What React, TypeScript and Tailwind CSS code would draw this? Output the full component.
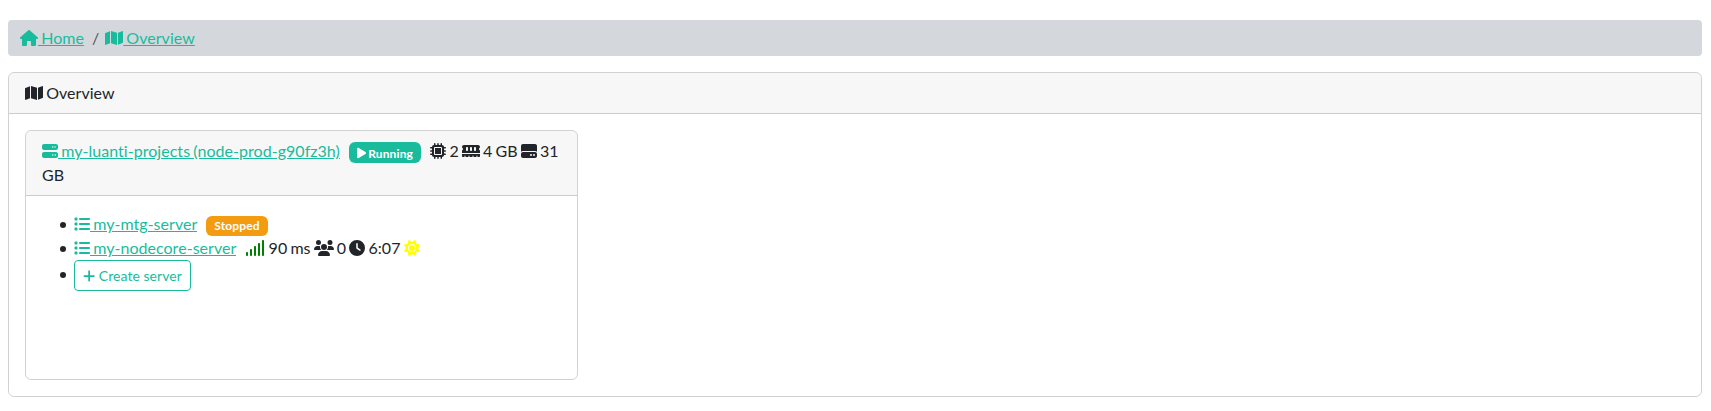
import type { ReactNode } from "react";
import {
  FaHouse, FaMap, FaServer, FaPlay, FaMicrochip, FaMemory, FaHardDrive,
  FaList, FaPlus, FaUsers, FaClock, FaSun, FaSignal,
} from "react-icons/fa6";

const icon = "inline-block h-[1em] align-[-0.125em]";
const gap = " \u00a0 ";

function Link({ children }: { children: ReactNode }) {
  return <a href="#" className="text-[#18bc9c] underline">{children}</a>;
}

function Badge({ className, children }: { className: string; children: ReactNode }) {
  return (
    <span className={`inline-block rounded-md px-[0.65em] py-[0.35em] text-center align-baseline text-xs leading-none font-bold tracking-[0.14px] whitespace-nowrap text-white ${className}`}>
      {children}
    </span>
  );
}

function Item({ children }: { children: ReactNode }) {
  return (
    <li className="before:mr-2 before:-ml-3.5 before:inline-block before:size-1.5 before:rounded-full before:bg-[#212529] before:align-[2px] before:content-['']">
      {children}
    </li>
  );
}

export default function App() {
  return (
    <div className="min-h-screen bg-white pt-5 pr-[9px] pl-2 font-['Lato',sans-serif] text-base leading-6 tracking-[0.04px] text-[#212529] [font-variant-ligatures:none] [word-spacing:-1px]">
      <nav className="mb-4 rounded bg-[#d4d8dd] px-3 py-1.5">
        <ol className="flex">
          <li><Link><FaHouse className={`${icon} w-[1.125em]`} /> Home</Link></li>
          <li className="flex pl-2">
            <span className="pr-1.5 text-[#212529]/75">/</span>
            <span><Link><FaMap className={`${icon} w-[1.125em]`} /> Overview</Link></span>
          </li>
        </ol>
      </nav>

      <section className="overflow-hidden rounded-md border border-black/[0.175]">
        <header className="border-b border-black/[0.175] bg-black/[0.03] px-4 py-2">
          <FaMap className={`${icon} w-[1.125em]`} /> Overview
        </header>
        <div className="p-4">
          <article className="h-[250px] w-1/3 overflow-hidden rounded-md border border-black/[0.175]">
            <header className="border-b border-black/[0.175] bg-black/[0.03] px-4 py-2">
              <Link><FaServer className={`${icon} w-[1em]`} /> my-luanti-projects (node-prod-g90fz3h)</Link>
              {gap}
              <Badge className="bg-[#18bc9c]"><FaPlay className={`${icon} w-[0.75em]`} /> Running</Badge>
              {gap}
              <FaMicrochip className={`${icon} w-[1em]`} /> 2{" "}
              <FaMemory className={`${icon} w-[1.125em]`} /> 4 GB{" "}
              <FaHardDrive className={`${icon} w-[1em]`} /> 31 GB
            </header>
            <div className="p-4">
              <ul className="pl-8">
                <Item>
                  <Link><FaList className={`${icon} w-[1em]`} /> my-mtg-server</Link>
                  {gap}
                  <Badge className="bg-[#f39c12]">Stopped</Badge>
                </Item>
                <Item>
                  <Link><FaList className={`${icon} w-[1em]`} /> my-nodecore-server</Link>
                  {gap}
                  <FaSignal className={`${icon} w-[1.25em] text-[green]`} /> 90 ms{" "}
                  <FaUsers className={`${icon} w-[1.25em]`} /> 0{" "}
                  <FaClock className={`${icon} w-[1em]`} /> 6:07{" "}
                  <FaSun className={`${icon} w-[1em] text-[yellow]`} />
                </Item>
                <Item>
                  <button className="inline-block rounded border border-[#18bc9c] px-2 py-1 align-middle text-sm leading-[21px] text-[#18bc9c]">
                    <FaPlus className={`${icon} w-[0.875em]`} /> Create server
                  </button>
                </Item>
              </ul>
            </div>
          </article>
        </div>
      </section>
    </div>
  );
}
